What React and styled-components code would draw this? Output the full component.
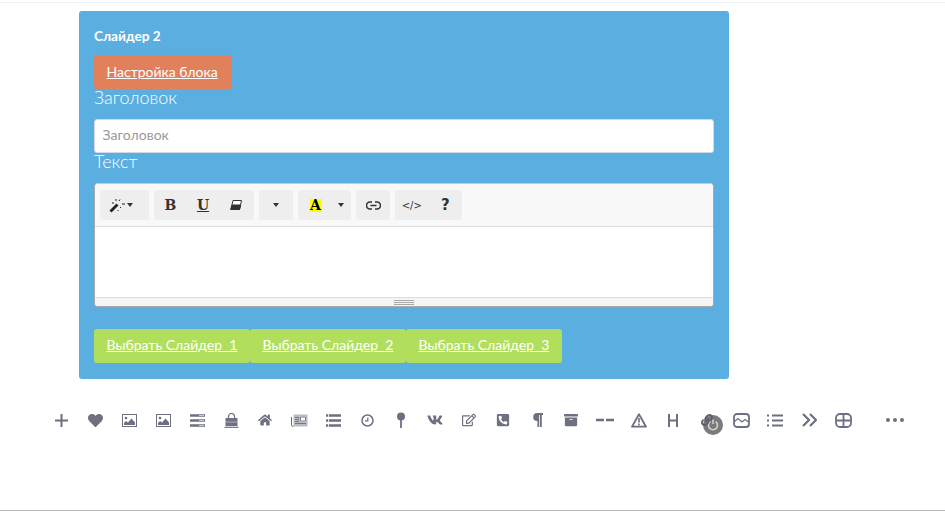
import styled, { createGlobalStyle } from 'styled-components'
import { FaHeart, FaHome, FaVk, FaRegEdit, FaPhoneSquareAlt, FaArchive, FaLink } from 'react-icons/fa'

const GlobalStyle = createGlobalStyle`
html, body {
    margin:0;
    padding:0;
    background:#fff;
    font-family:"Lato","Noto Sans",sans-serif;
}
*{
    box-sizing:border-box;
}
`

const Svg = ({ children, w = 18, h = 18, vb = '0 0 18 18' }) => (
    <svg width={w} height={h} viewBox={vb} fill="none" stroke="currentColor" strokeWidth="2">
        {children}
    </svg>
)

const ImageIcon = () => (
    <Svg w={15} h={13} vb="0 0 15 13">
        <rect x=".5" y=".5" width="14" height="12" strokeWidth="1" />
        <circle cx="4" cy="4" r="1.3" fill="currentColor" stroke="none" />
        <path d="M2 11V9l2-2 2 1.5L9.500 4.500 13 8.500V11z" fill="currentColor" stroke="none" />
    </Svg>
)

const icons = [
    <Svg w={15} h={15} vb="0 0 15 15"><path d="M7.500 1v13M1 7.500h13" /></Svg>,
    <FaHeart size={15} />,
    <ImageIcon />,
    <ImageIcon />,
    <Svg w={15} h={13} vb="0 0 15 13">
        <path d="M0 1.500h15M0 6.500h15M0 11.500h15" strokeWidth="2.600" />
        <path d="M9 1.500h5M9 6.500h5M9 11.500h5" stroke="#e4e5ea" strokeWidth=".8" />
    </Svg>,
    <Svg w={15} h={15} vb="0 0 15 15">
        <path d="M4.500 6V3.500a3 3 0 0 1 6 0V6" strokeWidth="1.200" />
        <path d="M1.500 5h12v8h-12z" fill="currentColor" stroke="none" />
        <path d="M1.500 9h12" stroke="#c8c9d0" strokeWidth=".7" />
        <path d="M0.500 14.300h14" strokeWidth="1.200" />
    </Svg>,
    <FaHome size={14} />,
    <Svg w={17} h={13} vb="0 0 17 13">
        <rect x="2.500" y=".5" width="14" height="12" fill="#b9bbc4" stroke="none" />
        <path d="M.5 3v8a1.500 1.500 0 0 0 2 1.300" strokeWidth="1" />
        <rect x="9" y="2.500" width="6" height="5" fill="#fff" stroke="none" />
        <path d="M9.500 3v4h5V3zM4 3.500h4M4 5.500h4M4 7.500h4M4 9.500h11" strokeWidth=".9" />
    </Svg>,
    <Svg w={15} h={13} vb="0 0 15 13">
        <path d="M0 1.500h2M2.800 1.500h12.200M0 6.500h2M2.800 6.500h12.200M0 11.500h2M2.800 11.500h12.200" strokeWidth="2.600" />
    </Svg>,
    <Svg w={13} h={13} vb="0 0 13 13">
        <circle cx="6.500" cy="6.500" r="5.500" strokeWidth="1.500" />
        <path d="M6.800 3.500v3.300H4" strokeWidth="1.300" />
    </Svg>,
    <Svg w={10} h={16} vb="0 0 10 16">
        <circle cx="5" cy="4.500" r="4" fill="currentColor" stroke="none" />
        <path d="M5 8v8" strokeWidth="1.800" />
    </Svg>,
    <FaVk size={16} />,
    <FaRegEdit size={14} />,
    <FaPhoneSquareAlt size={14} />,
    <Svg w={11} h={14} vb="0 0 11 14">
        <path d="M5 0h6v2H9.800v12H8V2H7.200v12H5.400V8A4 4 0 0 1 5 0z" fill="currentColor" stroke="none" />
    </Svg>,
    <FaArchive size={14} />,
    <Svg w={18} h={4} vb="0 0 18 4"><path d="M0 2h8M10 2h8" strokeWidth="2.400" /></Svg>,
    <Svg w={16} h={15} vb="0 0 16 15">
        <path d="M8 1.300 15 13.700H1z" strokeLinejoin="round" strokeWidth="1.800" />
        <path d="M8 5v4.500M8 10.500v2" strokeWidth="1.600" />
    </Svg>,
    <Svg w={10} h={13} vb="0 0 10 13"><path d="M1 0v13M9 0v13M1 6.500h8" /></Svg>,
    <FaLink size={12} color="#5a5d6e" />,
    <Svg w={17} h={15} vb="0 0 17 15">
        <rect x="1" y="1" width="15" height="13" rx="3" strokeWidth="1.800" />
        <path d="M1.500 8.500 5 5.500 9 9l3-2.500 3.500 2.500" strokeWidth="1.300" />
    </Svg>,
    <Svg w={16} h={13} vb="0 0 16 13">
        <path d="M0 1.500h2M0 6.500h2M0 11.500h2M5 1.500h11M5 6.500h11M5 11.500h11" strokeWidth="1.800" />
    </Svg>,
    <Svg w={15} h={14} vb="0 0 15 14">
        <path d="m1 1 6 6-6 6M8 1l6 6-6 6" strokeWidth="2.200" />
    </Svg>,
    <Svg w={17} h={15} vb="0 0 17 15">
        <rect x="1" y="1" width="15" height="13" rx="4" strokeWidth="1.800" />
        <path d="M8.500 1v13M1 7.500h15" strokeWidth="1.800" />
    </Svg>,
]

const App = () => {
    return (
        <Page>
            <GlobalStyle />
            <TopLine />
            <Panel>
                <Title>Слайдер 2</Title>
                <OrangeBtn href="#">Настройка блока</OrangeBtn>
                <Label>Заголовок</Label>
                <TextInput placeholder="Заголовок" />
                <Label>Текст</Label>
                <Editor>
                    <Toolbar>
                        <Group $w={49} $pr={8}>
                            <svg width="18" height="15" viewBox="0 0 18 15" fill="none" stroke="#222">
                                <path d="m1.500 13.500 7-7" strokeWidth="2.800" />
                                <path d="M7 1v2M11 1.500l-1 1.500M13 6h3M11 9l1 1M5 5H3M9 12v1" strokeWidth="1" />
                            </svg>
                            <Caret />
                        </Group>
                        <Group $w={100} $pr={2}>
                            <Tool><Letter>B</Letter></Tool>
                            <Tool><Letter $underline>U</Letter></Tool>
                            <Tool>
                                <svg width="12" height="10" viewBox="0 0 12 10" stroke="#333">
                                    <path d="M3 .5h8.500L9.500 9.500H.8z" fill="#fff" strokeWidth="1" />
                                    <path d="M2.200 5h8.500L9.500 9.500H.8z" fill="#333" strokeWidth="1" />
                                </svg>
                            </Tool>
                        </Group>
                        <Group $w={34}><Caret /></Group>
                        <Group $w={53}>
                            <ColorTool><Highlight>A</Highlight></ColorTool>
                            <CaretCell><Caret /></CaretCell>
                        </Group>
                        <Group $w={34}>
                            <svg width="15" height="9" viewBox="0 0 15 9" fill="none" stroke="#333" strokeWidth="1.600">
                                <path d="M6 1H4a3.500 3.500 0 0 0 0 7h2M9 1h2a3.500 3.500 0 0 1 0 7H9M4.500 4.500h6" />
                            </svg>
                        </Group>
                        <Group $w={67}>
                            <Tool><CodeMark>&lt;/&gt;</CodeMark></Tool>
                            <Tool><Help>?</Help></Tool>
                        </Group>
                    </Toolbar>
                    <EditArea />
                    <Status><Grip /></Status>
                </Editor>
                <GreenRow>
                    <GreenBtn href="#">Выбрать Слайдер  1</GreenBtn>
                    <GreenBtn href="#">Выбрать Слайдер  2</GreenBtn>
                    <GreenBtn href="#">Выбрать Слайдер  3</GreenBtn>
                </GreenRow>
            </Panel>
            <IconBar>
                {icons.map((icon, i) => (
                    <IconCell key={i}>
                        {i === 19 && (
                            <PowerBadge>
                                <svg width="12" height="12" viewBox="0 0 12 12" fill="none" stroke="#d4d4d4" strokeWidth="1.500">
                                    <path d="M3.500 2.500a4.500 4.500 0 1 0 5 0M6 .5v4.500" />
                                </svg>
                            </PowerBadge>
                        )}
                        <IconGlyph>{icon}</IconGlyph>
                    </IconCell>
                ))}
                <Dots><i /><i /><i /></Dots>
            </IconBar>
            <BottomLine />
        </Page>
    )
}

export default App

const Page = styled.div`
height:511px;
display:flex;
flex-direction:column;
overflow:hidden;
`
const TopLine = styled.div`
height:3px;
border-bottom:1px solid #eeeef5;
`
const Panel = styled.div`
width:650px;
height:368px;
margin:8px 0 0 79px;
padding:15px;
background:#5baee0;
border-radius:3px;
display:flex;
flex-direction:column;
align-items:flex-start;
color:#fff;
`
const Title = styled.div`
font-size:13.600px;
font-weight:700;
line-height:20px;
margin-bottom:9px;
`
const OrangeBtn = styled.a`
height:34px;
line-height:33px;
padding:0 12.500px;
width:138px;
white-space:nowrap;
background:#e0815c;
border-radius:3px;
color:#fff;
font-size:14px;
`
const Label = styled.div`
font-size:18px;
font-weight:300;
line-height:16px;
margin-bottom:14px;
color:#fff;
`
const TextInput = styled.input`
width:620px;
height:34px;
padding:0 7.500px 4px;
border:1px solid #d6d6e4;
border-radius:3px;
font-family:inherit;
font-size:14px;
outline:none;
&::placeholder{
    color:#999;
    opacity:1;
}
`
const Editor = styled.div`
width:620px;
height:124px;
border:1px solid #a9a9a9;
border-top-color:#c8c8c8;
border-radius:4px;
overflow:hidden;
background:#fff;
display:flex;
flex-direction:column;
`
const Toolbar = styled.div`
height:43px;
padding:6px 5px 0;
display:flex;
gap:5px;
background:#f8f8f8;
border-bottom:1px solid #ddd;
`
const Group = styled.div`
width:${p => p.$w}px;
height:30px;
padding-right:${p => p.$pr || 0}px;
display:flex;
align-items:center;
justify-content:center;
background:#eee;
border-radius:3px;
color:#333;
`
const Tool = styled.div`
flex:1;
display:flex;
align-items:center;
justify-content:center;
`
const ColorTool = styled(Tool)`
padding-left:2px;
`
const CaretCell = styled.div`
width:20px;
display:flex;
justify-content:center;
`
const Caret = styled.span`
width:0;
height:0;
border-left:3px solid transparent;
border-right:3px solid transparent;
border-top:4px solid #333;
`
const Letter = styled.span`
font-family:"DejaVu Serif",serif;
font-weight:700;
font-size:14px;
color:#333;
text-decoration:${p => (p.$underline ? 'underline' : 'none')};
`
const Highlight = styled.span`
font-family:"DejaVu Serif",serif;
font-weight:700;
font-size:14px;
line-height:13px;
width:12px;
text-align:center;
background:#ff0;
color:#000;
`
const CodeMark = styled.span`
font-family:"DejaVu Sans",sans-serif;
font-size:10px;
color:#333;
`
const Help = styled.span`
font-family:"DejaVu Sans",sans-serif;
font-weight:700;
font-size:15px;
color:#333;
`
const EditArea = styled.div`
flex:1;
background:#fff;
`
const Status = styled.div`
height:9px;
background:#f5f5f5;
border-top:1px solid #ddd;
display:flex;
justify-content:center;
align-items:center;
`
const Grip = styled.div`
width:20px;
height:5px;
border-top:1px solid #a9a9a9;
border-bottom:1px solid #a9a9a9;
background:linear-gradient(#a9a9a9,#a9a9a9) center / 100% 1px no-repeat;
`
const GreenRow = styled.div`
display:flex;
margin-top:22px;
`
const GreenBtn = styled.a`
width:156px;
height:34px;
line-height:32px;
padding:0 12.500px;
white-space:pre;
background:#b1df5d;
border-radius:3px;
color:#fff;
font-size:14px;
`
const IconBar = styled.div`
display:flex;
align-items:center;
height:34px;
margin:24px 0 0 44px;
color:#6c7080;
`
const IconCell = styled.div`
position:relative;
width:34px;
height:34px;
display:flex;
align-items:center;
justify-content:center;
`
const IconGlyph = styled.span`
position:relative;
display:flex;
`
const PowerBadge = styled.div`
position:absolute;
left:13px;
top:12px;
width:20px;
height:20px;
border-radius:50%;
background:#7b7b7b;
display:flex;
align-items:center;
justify-content:center;
`
const Dots = styled.div`
display:flex;
gap:3px;
margin-left:26px;
i{
    width:4px;
    height:4px;
    border-radius:50%;
    background:#6c7080;
}
`
const BottomLine = styled.div`
margin-top:auto;
height:1px;
background:#b4bcb4;
`
